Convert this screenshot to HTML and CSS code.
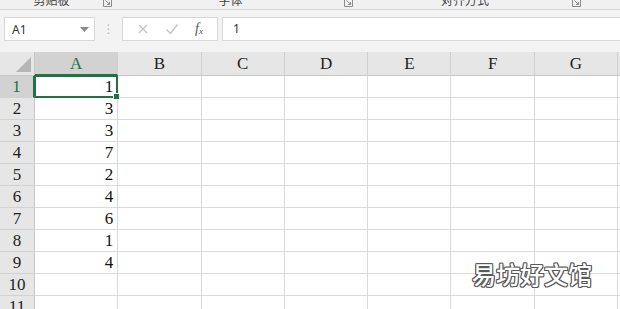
FILE: index.html
```html
<!DOCTYPE html>
<html lang="zh">
<head>
  <meta charset="UTF-8" />
  <title>Sheet</title>
  <link rel="stylesheet" href="styles.css">
</head>
<body>
  <!-- ribbon group labels, cut off at the top -->
  <div class="ribbon">
    <div class="group g1">
      <span class="label">剪贴板</span>
      <svg class="launcher" width="9" height="7" viewBox="0 0 9 7"><path d="M0.5 0v6.5h8V0M2.5 0.5l4 4M6.5 2v2.5H4" stroke="#8c8c8c" fill="none"/></svg>
    </div>
    <div class="group g2">
      <span class="label">字体</span>
      <svg class="launcher" width="9" height="7" viewBox="0 0 9 7"><path d="M0.5 0v6.5h8V0M2.5 0.5l4 4M6.5 2v2.5H4" stroke="#8c8c8c" fill="none"/></svg>
    </div>
    <div class="group g3">
      <span class="label">对齐方式</span>
      <svg class="launcher" width="9" height="7" viewBox="0 0 9 7"><path d="M0.5 0v6.5h8V0M2.5 0.5l4 4M6.5 2v2.5H4" stroke="#8c8c8c" fill="none"/></svg>
    </div>
    <div class="group g4"></div>
  </div>

  <!-- formula bar -->
  <div class="formula-bar">
    <div class="name-box">
      <span>A1</span>
      <svg width="9" height="5" viewBox="0 0 9 5"><path d="M0 0h9L4.5 5z" fill="#8a8a8a"/></svg>
    </div>
    <div class="grip">⋮</div>
    <div class="fx-box">
      <svg width="12" height="12" viewBox="0 0 12 12"><path d="M2 2l8 8M10 2l-8 8" stroke="#c4c4c4" stroke-width="1.3" fill="none"/></svg>
      <svg width="14" height="12" viewBox="0 0 14 12"><path d="M1.5 6.5l4 4 7-9" stroke="#c4c4c4" stroke-width="1.4" fill="none"/></svg>
      <span class="fx">f<sub>x</sub></span>
    </div>
    <div class="formula-input">1</div>
  </div>

  <!-- sheet grid -->
  <div class="sheet">
    <div class="corner"></div>
    <div class="col-head active">A</div>
    <div class="col-head">B</div>
    <div class="col-head">C</div>
    <div class="col-head">D</div>
    <div class="col-head">E</div>
    <div class="col-head">F</div>
    <div class="col-head">G</div>
    <div class="col-head rest"></div>

    <div class="row-head active">1</div><div class="cell num selected">1</div><div class="cell"></div><div class="cell"></div><div class="cell"></div><div class="cell"></div><div class="cell"></div><div class="cell"></div><div class="cell rest"></div>
    <div class="row-head">2</div><div class="cell num">3</div><div class="cell"></div><div class="cell"></div><div class="cell"></div><div class="cell"></div><div class="cell"></div><div class="cell"></div><div class="cell rest"></div>
    <div class="row-head">3</div><div class="cell num">3</div><div class="cell"></div><div class="cell"></div><div class="cell"></div><div class="cell"></div><div class="cell"></div><div class="cell"></div><div class="cell rest"></div>
    <div class="row-head">4</div><div class="cell num">7</div><div class="cell"></div><div class="cell"></div><div class="cell"></div><div class="cell"></div><div class="cell"></div><div class="cell"></div><div class="cell rest"></div>
    <div class="row-head">5</div><div class="cell num">2</div><div class="cell"></div><div class="cell"></div><div class="cell"></div><div class="cell"></div><div class="cell"></div><div class="cell"></div><div class="cell rest"></div>
    <div class="row-head">6</div><div class="cell num">4</div><div class="cell"></div><div class="cell"></div><div class="cell"></div><div class="cell"></div><div class="cell"></div><div class="cell"></div><div class="cell rest"></div>
    <div class="row-head">7</div><div class="cell num">6</div><div class="cell"></div><div class="cell"></div><div class="cell"></div><div class="cell"></div><div class="cell"></div><div class="cell"></div><div class="cell rest"></div>
    <div class="row-head">8</div><div class="cell num">1</div><div class="cell"></div><div class="cell"></div><div class="cell"></div><div class="cell"></div><div class="cell"></div><div class="cell"></div><div class="cell rest"></div>
    <div class="row-head">9</div><div class="cell num">4</div><div class="cell"></div><div class="cell"></div><div class="cell"></div><div class="cell"></div><div class="cell"></div><div class="cell"></div><div class="cell rest"></div>
    <div class="row-head">10</div><div class="cell"></div><div class="cell"></div><div class="cell"></div><div class="cell"></div><div class="cell"></div><div class="cell"></div><div class="cell"></div><div class="cell rest"></div>
    <div class="row-head">11</div><div class="cell"></div><div class="cell"></div><div class="cell"></div><div class="cell"></div><div class="cell"></div><div class="cell"></div><div class="cell"></div><div class="cell rest"></div>
  </div>

  <div class="watermark">易坊好文馆</div>
</body>
</html>
```

FILE: styles.css
```css
html, body {
  margin: 0;
  padding: 0;
  width: 620px;
  height: 309px;
  overflow: hidden;
  background: #ffffff;
  font-family: "Liberation Serif", serif;
  position: relative;
}

/* ribbon strip */
.ribbon {
  display: flex;
  height: 9px;
  background: #f1f1f1;
  border-bottom: 1px solid #d6d6d6;
  overflow: hidden;
}

.group {
  display: flex;
  align-items: flex-start;
}

.g1 { width: 117px; }
.g2 { width: 241px; }
.g3 { width: 228px; }
.g4 { flex: 1; }

.group .label {
  flex: 1;
  text-align: center;
  font-family: "Noto Sans CJK SC", sans-serif;
  font-size: 12px;
  line-height: 12px;
  margin-top: -6px;
  color: #444;
}

.group .launcher {
  margin: 0 5px 0 0;
  flex: none;
}

/* formula bar */
.formula-bar {
  display: flex;
  align-items: center;
  height: 42px;
  padding: 0 0 4px 4px;
  background: #f3f3f3;
  box-sizing: border-box;
}

.name-box {
  display: flex;
  align-items: center;
  justify-content: space-between;
  width: 91px;
  height: 24px;
  box-sizing: border-box;
  padding: 0 5px 0 7px;
  background: #fff;
  border: 1px solid #d8d8d8;
  font-family: "Noto Sans", sans-serif;
  font-size: 12px;
  color: #333;
}

.grip {
  width: 27px;
  text-align: center;
  color: #b8b8b8;
  font-family: "DejaVu Sans", sans-serif;
  font-size: 12px;
}

.fx-box {
  display: flex;
  align-items: center;
  justify-content: space-around;
  width: 96px;
  height: 24px;
  box-sizing: border-box;
  padding: 0 6px;
  background: #fff;
  border: 1px solid #d8d8d8;
}

.fx {
  font-family: "Liberation Serif", serif;
  font-style: italic;
  font-size: 14px;
  color: #555;
}

.fx sub {
  font-size: 9px;
  vertical-align: -1px;
}

.formula-input {
  flex: 1;
  height: 24px;
  line-height: 22px;
  margin-left: 4px;
  box-sizing: border-box;
  padding-left: 10px;
  background: #fff;
  border: 1px solid #d8d8d8;
  border-right: none;
  font-family: "Noto Sans", sans-serif;
  font-size: 12px;
  color: #333;
}

/* sheet */
.sheet {
  display: grid;
  grid-template-columns: 35px repeat(7, 83.3px) 1fr;
  grid-auto-rows: 22px;
  grid-template-rows: 24px;
}

.corner {
  position: relative;
  background: #e6e6e6;
  border-right: 1px solid #c8c8c8;
  border-bottom: 1px solid #c8c8c8;
}

.corner::after {
  content: "";
  position: absolute;
  right: 3px;
  bottom: 3px;
  border-left: 15px solid transparent;
  border-bottom: 15px solid #b5b5b5;
}

.col-head {
  background: #e6e6e6;
  border-right: 1px solid #cfcfcf;
  border-bottom: 1px solid #c8c8c8;
  text-align: center;
  font-size: 17px;
  line-height: 24px;
  color: #222;
}

.col-head.active {
  background: #d2d2d2;
  color: #217346;
  border-bottom: 2px solid #217346;
  line-height: 23px;
}

.row-head {
  background: #e6e6e6;
  border-right: 1px solid #c8c8c8;
  border-bottom: 1px solid #d2d2d2;
  text-align: center;
  font-size: 17px;
  line-height: 22px;
  color: #222;
}

.row-head.active {
  background: #d2d2d2;
  color: #217346;
  border-right: 2px solid #217346;
}

.cell {
  border-right: 1px solid #dadada;
  border-bottom: 1px solid #dadada;
  font-size: 17px;
  line-height: 22px;
  color: #111;
}

.cell.rest,
.col-head.rest {
  border-right: none;
}

.num {
  text-align: right;
  padding-right: 4px;
}

.selected {
  position: relative;
}

.selected::before {
  content: "";
  position: absolute;
  left: -1px;
  top: -1px;
  right: -1px;
  bottom: -1px;
  border: 2px solid #217346;
}

.selected::after {
  content: "";
  position: absolute;
  right: -3px;
  bottom: -3px;
  width: 5px;
  height: 5px;
  background: #217346;
  border: 1px solid #fff;
}

/* overlay watermark */
.watermark {
  position: absolute;
  left: 472px;
  top: 258px;
  font-family: "Noto Sans CJK SC", sans-serif;
  font-weight: 500;
  font-size: 24px;
  line-height: 32px;
  color: #fff;
  text-shadow:
    1px 0 0 #5a5a5a, -1px 0 0 #5a5a5a, 0 1px 0 #5a5a5a, 0 -1px 0 #5a5a5a,
    1px 1px 0 #5a5a5a, -1px -1px 0 #5a5a5a, 1px -1px 0 #5a5a5a, -1px 1px 0 #5a5a5a;
}
```
